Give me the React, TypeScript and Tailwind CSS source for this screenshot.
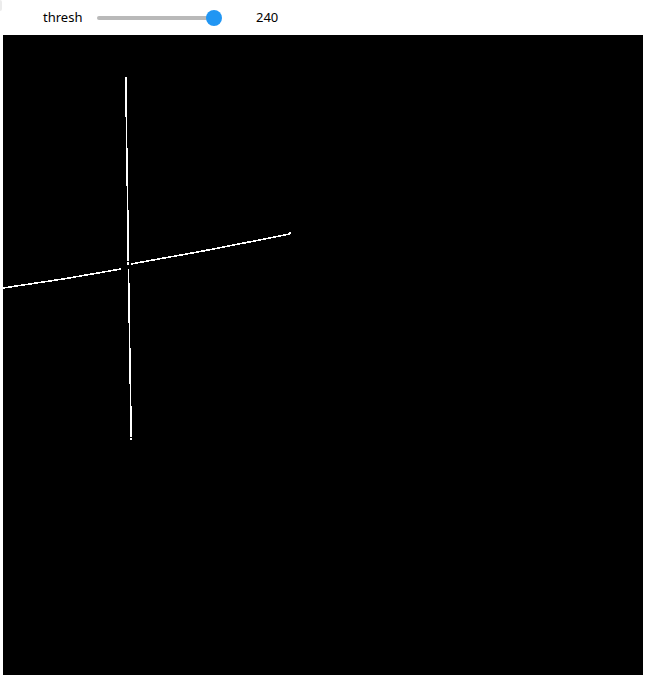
const value = 240;
const max = 255;

function Slider({ value, max }: { value: number; max: number }) {
  const pct = (value / max) * 100;
  return (
    <div className="relative h-4 w-[132px]">
      <div className="absolute left-0 right-2 top-1/2 h-1 -translate-y-1/2 rounded-full bg-[#b9b9b9]" />
      <div
        className="absolute top-1/2 h-4 w-4 -translate-x-1/2 -translate-y-1/2 rounded-full bg-[#2196f3]"
        style={{ left: `calc(8px + (100% - 16px) * ${pct / 100})` }}
      />
    </div>
  );
}

export default function App() {
  return (
    <div className="relative h-[677px] w-[647px] bg-white font-['Noto_Sans',sans-serif] text-[13px] text-black">
      <div className="absolute left-0 top-0 h-[11px] w-[2px] rounded-r bg-[#ececec]" />
      <div className="flex h-[35px] items-center pl-[43px]">
        <span className="w-[40px]">thresh</span>
        <div className="ml-[14px]">
          <Slider value={value} max={max} />
        </div>
        <span className="ml-[27px]">{value}</span>
      </div>
      <div className="ml-[3px] h-[640px] w-[640px] bg-black">
        <svg width="640" height="640" viewBox="0 0 640 640" shapeRendering="crispEdges">
          <g stroke="#fff" strokeWidth="1.6" fill="none">
            <polyline points="122.8,43 123.8,120 124.8,180 125.3,226" />
            <polyline points="125.5,234 126.5,300 127.5,360 128.3,402" />
            <polyline points="0,253 60,244 118,234" />
            <polyline points="128,229 200,216 287,199" />
          </g>
          <g fill="#fff">
            <rect x="122" y="42" width="2" height="2" />
            <rect x="124" y="227" width="2" height="3" />
            <rect x="127" y="403" width="2" height="2" />
            <rect x="286" y="197" width="2" height="2" />
          </g>
        </svg>
      </div>
    </div>
  );
}
